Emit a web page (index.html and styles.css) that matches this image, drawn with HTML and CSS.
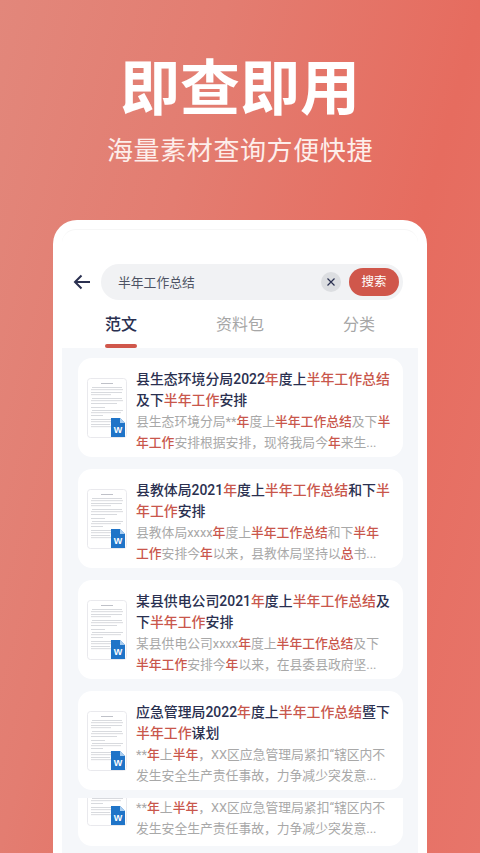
FILE: index.html
```html
<!DOCTYPE html>
<html lang="zh">
<head>
  <meta charset="utf-8">
  <title>即查即用</title>
  <link rel="stylesheet" href="styles.css">
</head>
<body>
  <svg class="defs" width="0" height="0">
    <symbol id="doc" viewBox="0 0 40 60">
      <rect x="0.5" y="0.5" width="39" height="59" rx="3" fill="#fff" stroke="#e9e9ed"/>
      <g fill="#bfc1c8">
        <rect x="14" y="5" width="12" height="1"/>
        <rect x="5" y="9" width="30" height="0.6"/>
        <rect x="4" y="11.5" width="32" height="0.6"/>
        <rect x="4" y="14" width="31" height="0.6"/>
        <rect x="4" y="16.5" width="20" height="0.6"/>
        <rect x="5" y="20" width="30" height="0.6"/>
        <rect x="4" y="22.5" width="32" height="0.6"/>
        <rect x="4" y="25" width="26" height="0.6"/>
        <rect x="4" y="29" width="14" height="0.6"/>
        <rect x="5" y="32" width="31" height="0.6"/>
        <rect x="4" y="34.5" width="30" height="0.6"/>
        <rect x="4" y="37" width="12" height="0.6"/>
        <rect x="4" y="41" width="20" height="0.6"/>
        <rect x="4" y="43.5" width="20" height="0.6"/>
        <rect x="4" y="46" width="19" height="0.6"/>
        <rect x="4" y="48.5" width="20" height="0.6"/>
      </g>
      <path d="M24 40h9l5 5v14H24z" fill="#1f74c8"/>
      <path d="M33 40l5 5h-5z" fill="#a9cdf0"/>
    </symbol>
  </svg>

  <header class="hero">
    <h1>即查即用</h1>
    <p>海量素材查询方便快捷</p>
  </header>

  <div class="phone">
    <div class="screen">
      <div class="search-row">
        <svg class="back" width="18" height="16" viewBox="0 0 18 16">
          <path d="M17 8H2M8.5 1.5 2 8l6.5 6.5" fill="none" stroke="#2a3050" stroke-width="2"/>
        </svg>
        <div class="search-box">
          <span class="keyword">半年工作总结</span>
          <span class="clear">
            <svg width="10" height="10" viewBox="0 0 10 10">
              <path d="M1.5 1.5l7 7M8.5 1.5l-7 7" stroke="#2a3050" stroke-width="1.2"/>
            </svg>
          </span>
          <span class="search-btn">搜索</span>
        </div>
      </div>

      <div class="tabs">
        <span class="tab active">范文</span>
        <span class="tab">资料包</span>
        <span class="tab">分类</span>
      </div>

      <div class="list">
        <div class="card">
          <svg class="thumb" viewBox="0 0 40 60"><use href="#doc"/><text x="31" y="55" class="doc-w">W</text></svg>
          <div class="card-text">
            <div class="card-title">县生态环境分局2022<em>年</em>度上<em>半年工作总结</em>及下<em>半年工作</em>安排</div>
            <div class="card-desc">县生态环境分局**<em>年</em>度上<em>半年工作总结</em>及下<em>半年工作</em>安排根据安排，现将我局今<em>年</em>来生...</div>
          </div>
        </div>

        <div class="card">
          <svg class="thumb" viewBox="0 0 40 60"><use href="#doc"/><text x="31" y="55" class="doc-w">W</text></svg>
          <div class="card-text">
            <div class="card-title">县教体局2021<em>年</em>度上<em>半年工作总结</em>和下<em>半年工作</em>安排</div>
            <div class="card-desc">县教体局xxxx<em>年</em>度上<em>半年工作总结</em>和下<em>半年工作</em>安排今<em>年</em>以来，县教体局坚持以<em>总</em>书...</div>
          </div>
        </div>

        <div class="card">
          <svg class="thumb" viewBox="0 0 40 60"><use href="#doc"/><text x="31" y="55" class="doc-w">W</text></svg>
          <div class="card-text">
            <div class="card-title">某县供电公司2021<em>年</em>度上<em>半年工作总结</em>及下<em>半年工作</em>安排</div>
            <div class="card-desc">某县供电公司xxxx<em>年</em>度上<em>半年工作总结</em>及下<em>半年工作</em>安排今<em>年</em>以来，在县委县政府坚...</div>
          </div>
        </div>

        <div class="card">
          <svg class="thumb" viewBox="0 0 40 60"><use href="#doc"/><text x="31" y="55" class="doc-w">W</text></svg>
          <div class="card-text">
            <div class="card-title">应急管理局2022<em>年</em>度上<em>半年工作总结</em>暨下<em>半年工作</em>谋划</div>
            <div class="card-desc">**<em>年</em>上<em>半年</em>，XX区应急管理局紧扣“辖区内不发生安全生产责任事故，力争减少突发意...</div>
          </div>
        </div>

        <div class="card card-cut">
          <svg class="thumb" viewBox="0 0 40 60"><use href="#doc"/><text x="31" y="55" class="doc-w">W</text></svg>
          <div class="card-text">
            <div class="card-desc">**<em>年</em>上<em>半年</em>，XX区应急管理局紧扣“辖区内不发生安全生产责任事故，力争减少突发意...</div>
          </div>
        </div>
      </div>
    </div>
  </div>
</body>
</html>
```

FILE: styles.css
```css
* {
  margin: 0;
  padding: 0;
  box-sizing: border-box;
}

html, body {
  height: 853px;
  overflow: hidden;
}

body {
  font-family: Roboto, "Noto Sans CJK SC", sans-serif;
  background-image: linear-gradient(105deg, #e2877b, #e37d71 32%, #e66c5f 68%, #e7756a);
}

.defs {
  display: block;
  height: 0;
}

.doc-w {
  font-family: "Liberation Sans", sans-serif;
  font-size: 9px;
  font-weight: bold;
  fill: #fff;
  text-anchor: middle;
}

.hero {
  height: 220px;
  padding-top: 52px;
  text-align: center;
  color: #fff;
}

.hero h1 {
  font-size: 60px;
  line-height: 76px;
  font-weight: 700;
}

.hero p {
  margin-top: 4px;
  font-size: 26px;
  line-height: 38px;
  letter-spacing: 0.6px;
  color: #fdeeeb;
}

.phone {
  width: 374px;
  height: 633px;
  margin-left: 53px;
  padding: 9px 9px 0;
  background-color: #fff;
  border-radius: 24px 24px 0 0;
}

.screen {
  height: 100%;
  border-radius: 14px 14px 0 0;
  border-top: 1px solid #f6f6f6;
  display: flex;
  flex-direction: column;
}

.search-row {
  display: flex;
  align-items: center;
  height: 36px;
  margin-top: 34px;
  padding-left: 11px;
}

.back {
  flex: none;
}

.search-box {
  display: flex;
  align-items: center;
  width: 302px;
  height: 36px;
  margin-left: 10px;
  padding: 0 4px 0 17px;
  border-radius: 18px;
  background-color: #f1f2f4;
}

.keyword {
  flex: 1;
  padding-bottom: 2px;
  font-size: 12.8px;
  color: #4d5263;
}

.clear {
  display: flex;
  align-items: center;
  justify-content: center;
  width: 20px;
  height: 20px;
  border-radius: 50%;
  background-color: #dcdee1;
}

.search-btn {
  width: 50px;
  height: 28px;
  margin-left: 8px;
  border-radius: 14px;
  background-color: #d0574b;
  color: #fff;
  font-size: 12.5px;
  line-height: 28px;
  text-align: center;
}

.tabs {
  display: flex;
  justify-content: space-between;
  height: 48px;
  padding: 0 43px;
}

.tab {
  position: relative;
  padding-top: 2px;
  font-size: 16px;
  line-height: 46px;
  color: #a6a6a6;
}

.tab.active {
  font-weight: 500;
  color: #2a3050;
}

.tab.active::after {
  content: "";
  position: absolute;
  left: 0;
  right: 0;
  bottom: 0;
  height: 4px;
  border-radius: 2px;
  background-color: #d0574b;
}

.list {
  flex: 1;
  overflow: hidden;
  display: flex;
  flex-direction: column;
  gap: 12px;
  padding: 10px 15px 0 16px;
  background-color: #f5f7fa;
}

.card {
  flex: none;
  display: flex;
  align-items: center;
  gap: 9px;
  height: 99px;
  padding: 0 11.5px 0 9px;
  border-radius: 14px;
  background-color: #fff;
}

.card-cut {
  align-items: flex-end;
  height: 48px;
  margin-top: -4px;
  padding-bottom: 7px;
  overflow: hidden;
  border-radius: 0 0 14px 14px;
}

.thumb {
  flex: none;
  width: 40px;
  height: 60px;
}

.card-cut .thumb {
  margin-bottom: 13px;
}

.card-text {
  flex: 1;
  min-width: 0;
  padding-top: 6px;
}

.card-title {
  font-size: 13.9px;
  line-height: 21px;
  font-weight: 500;
  color: #2a3050;
}

.card-desc {
  font-size: 12.8px;
  line-height: 21px;
  color: #a8a8a8;
}

.card-desc em {
  font-weight: 500;
}

em {
  font-style: normal;
  color: #c9574c;
}
```
